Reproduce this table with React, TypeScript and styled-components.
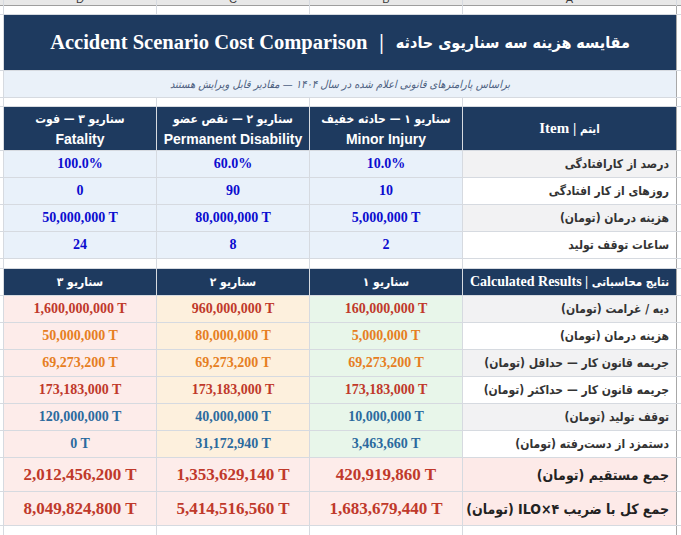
import React from 'react';
import styled, { createGlobalStyle } from 'styled-components';

const NAVY = '#1e3a5f';
const LINE = '#d6dae0';
const FA = '"DejaVu Sans Condensed", "DejaVu Sans", sans-serif';

const GlobalStyle = createGlobalStyle`
  html, body {
    margin: 0;
    padding: 0;
    background: #ffffff;
  }
  body {
    font-family: "Liberation Sans", "DejaVu Sans", sans-serif;
  }
`;

type Tone = 'red' | 'orange' | 'blue' | 'input';
type Fill = 'pink' | 'peach' | 'mint' | 'ice';
type Shade = 'grey' | 'white' | 'total';

const toneColor: Record<Tone, string> = {
    red: '#c0392b',
    orange: '#e67e22',
    blue: '#2b6a9e',
    input: '#0c0ccf',
};

const fillColor: Record<Fill, string> = {
    pink: '#fdecea',
    peach: '#fdf0dd',
    mint: '#e8f6ea',
    ice: '#e9f1fa',
};

const shadeColor: Record<Shade, string> = {
    grey: '#f2f2f3',
    white: '#ffffff',
    total: '#fdeae8',
};

const inputs = [
    { label: 'درصد از کارافتادگی', values: ['10.0%', '60.0%', '100.0%'] },
    { label: 'روزهای از کار افتادگی', values: ['10', '90', '0'] },
    { label: 'هزینه درمان (تومان)', values: ['5,000,000 T', '80,000,000 T', '50,000,000 T'] },
    { label: 'ساعات توقف تولید', values: ['2', '8', '24'] },
];

const results: { label: string; tone: Tone; values: string[] }[] = [
    { label: 'دیه / غرامت (تومان)', tone: 'red', values: ['160,000,000 T', '960,000,000 T', '1,600,000,000 T'] },
    { label: 'هزینه درمان (تومان)', tone: 'orange', values: ['5,000,000 T', '80,000,000 T', '50,000,000 T'] },
    { label: 'جریمه قانون کار — حداقل (تومان)', tone: 'orange', values: ['69,273,200 T', '69,273,200 T', '69,273,200 T'] },
    { label: 'جریمه قانون کار — حداکثر (تومان)', tone: 'red', values: ['173,183,000 T', '173,183,000 T', '173,183,000 T'] },
    { label: 'توقف تولید (تومان)', tone: 'blue', values: ['10,000,000 T', '40,000,000 T', '120,000,000 T'] },
    { label: 'دستمزد از دست‌رفته (تومان)', tone: 'blue', values: ['3,463,660 T', '31,172,940 T', '0 T'] },
];

const totals = [
    { label: 'جمع مستقیم (تومان)', values: ['420,919,860 T', '1,353,629,140 T', '2,012,456,200 T'] },
    { label: 'جمع کل با ضریب ۴×ILO (تومان)', values: ['1,683,679,440 T', '5,414,516,560 T', '8,049,824,800 T'] },
];

const scenarioFills: Fill[] = ['mint', 'peach', 'pink'];

function App() {
    return (
        <>
            <GlobalStyle />
            <Sheet>
                {/* column letters */}
                <ColHead />
                <ColHead><Letter>A</Letter></ColHead>
                <ColHead><Letter>B</Letter></ColHead>
                <ColHead><Letter>C</Letter></ColHead>
                <ColHead><Letter>D</Letter></ColHead>
                <ColHead />

                <RowHead /><Blank /><Blank /><Blank /><Blank /><Strip />

                <RowHead />
                <Banner>
                    <BannerFa>مقایسه هزینه سه سناریوی حادثه</BannerFa>
                    <span>|</span>
                    <span>Accident Scenario Cost Comparison</span>
                </Banner>
                <Strip />

                <RowHead />
                <Note>براساس پارامترهای قانونی اعلام شده در سال ۱۴۰۴ — مقادیر قابل ویرایش هستند</Note>
                <Strip />

                <RowHead /><Blank /><Blank /><Blank /><Blank /><Strip />

                <RowHead />
                <HeadCell>
                    <ItemTitle><MixFa>ایتم</MixFa> | Item</ItemTitle>
                </HeadCell>
                <HeadCell>
                    <HeadLine>سناریو ۱ — حادثه خفیف</HeadLine>
                    <HeadEn>Minor Injury</HeadEn>
                </HeadCell>
                <HeadCell>
                    <HeadLine>سناریو ۲ — نقص عضو</HeadLine>
                    <HeadEn>Permanent Disability</HeadEn>
                </HeadCell>
                <HeadCell>
                    <HeadLine>سناریو ۳ — فوت</HeadLine>
                    <HeadEn>Fatality</HeadEn>
                </HeadCell>
                <Strip />

                {inputs.map((row, i) => (
                    <React.Fragment key={row.label}>
                        <RowHead />
                        <Label $shade={i % 2 === 0 ? 'grey' : 'white'}>{row.label}</Label>
                        {row.values.map((v, j) => (
                            <Value key={j} $fill="ice" $tone="input">{v}</Value>
                        ))}
                        <Strip />
                    </React.Fragment>
                ))}

                <RowHead /><Blank /><Blank /><Blank /><Blank /><Strip />

                <RowHead />
                <HeadCell>
                    <ItemTitle $tight><MixFa>نتایج محاسباتی</MixFa> | Calculated Results</ItemTitle>
                </HeadCell>
                <HeadCell><HeadLine>سناریو ۱</HeadLine></HeadCell>
                <HeadCell><HeadLine>سناریو ۲</HeadLine></HeadCell>
                <HeadCell><HeadLine>سناریو ۳</HeadLine></HeadCell>
                <Strip />

                {results.map((row, i) => (
                    <React.Fragment key={row.label}>
                        <RowHead />
                        <Label $shade={i % 2 === 0 ? 'grey' : 'white'}>{row.label}</Label>
                        {row.values.map((v, j) => (
                            <Value key={j} $fill={scenarioFills[j]} $tone={row.tone}>{v}</Value>
                        ))}
                        <Strip />
                    </React.Fragment>
                ))}

                {totals.map((row) => (
                    <React.Fragment key={row.label}>
                        <RowHead />
                        <Label $shade="total">{row.label}</Label>
                        {row.values.map((v, j) => (
                            <Value key={j} $fill="pink" $tone="red" $big>{v}</Value>
                        ))}
                        <Strip />
                    </React.Fragment>
                ))}

                <RowHead /><Blank /><Blank /><Blank /><Blank /><Strip />
            </Sheet>
        </>
    );
}

const Sheet = styled.div`
    direction: rtl;
    display: grid;
    grid-template-columns: 4px 213px 152px 152px 152px 3px;
    grid-template-rows:
        5px 8px 55px 26px 8px 43px
        26px 26px 26px 26px
        9px 26px
        26px 26px 26px 26px 26px 26px
        33px 33px 20px;
    gap: 1px;
    width: 681px;
    height: 535px;
    overflow: hidden;
    background: ${LINE};
`;

const ColHead = styled.div`
    display: flex;
    justify-content: center;
    align-items: flex-end;
    overflow: hidden;
    background: #e8e8e8;
    box-shadow: 0 1px 0 #9e9e9e;
`;

const Letter = styled.span`
    font-family: "Liberation Sans", sans-serif;
    font-size: 11px;
    line-height: 11px;
    color: #3c3c3c;
`;

const RowHead = styled.div`
    background: #ffffff;
    box-shadow: -1px 0 0 #a8a8a8;
`;

const Strip = styled.div`
    background: #ffffff;
`;

const Blank = styled.div`
    background: #ffffff;
`;

const Banner = styled.div`
    grid-column: span 4;
    display: flex;
    justify-content: center;
    align-items: center;
    gap: 12px;
    background: ${NAVY};
    color: #ffffff;
    font-family: "Liberation Serif", serif;
    font-weight: 700;
    font-size: 20.5px;
    white-space: nowrap;
`;

const BannerFa = styled.span`
    font-family: ${FA};
    font-size: 16px;
`;

const Note = styled.div`
    grid-column: span 4;
    display: flex;
    justify-content: center;
    align-items: center;
    background: #eaf1f9;
    color: #4d5f80;
    font-family: ${FA};
    font-style: italic;
    font-size: 11px;
`;

const HeadCell = styled.div`
    display: flex;
    flex-direction: column;
    justify-content: center;
    align-items: center;
    overflow: hidden;
    background: ${NAVY};
    color: #ffffff;
    font-weight: 700;
    white-space: nowrap;
`;

const ItemTitle = styled.div<{ $tight?: boolean }>`
    font-family: "Liberation Serif", serif;
    font-size: ${(p) => (p.$tight ? '14px' : '15px')};
`;

const MixFa = styled.span`
    font-family: ${FA};
    font-size: 11.5px;
`;

const HeadLine = styled.div`
    font-family: ${FA};
    font-size: 12px;
    line-height: 20px;
`;

const HeadEn = styled.div`
    font-family: "Liberation Sans", sans-serif;
    font-size: 14px;
    line-height: 20px;
`;

const Label = styled.div<{ $shade: Shade }>`
    display: flex;
    align-items: center;
    padding: 0 7px;
    overflow: hidden;
    background: ${(p) => shadeColor[p.$shade]};
    color: ${(p) => (p.$shade === 'total' ? '#222222' : '#333333')};
    font-family: ${FA};
    font-weight: 700;
    font-size: ${(p) => (p.$shade === 'total' ? '14px' : '12px')};
    white-space: nowrap;
`;

const Value = styled.div<{ $fill: Fill; $tone: Tone; $big?: boolean }>`
    direction: ltr;
    display: flex;
    justify-content: center;
    align-items: center;
    overflow: hidden;
    background: ${(p) => fillColor[p.$fill]};
    color: ${(p) => toneColor[p.$tone]};
    font-family: "Liberation Serif", serif;
    font-weight: 700;
    font-size: ${(p) => (p.$big ? '17px' : '14px')};
    white-space: nowrap;
`;

export default App;
